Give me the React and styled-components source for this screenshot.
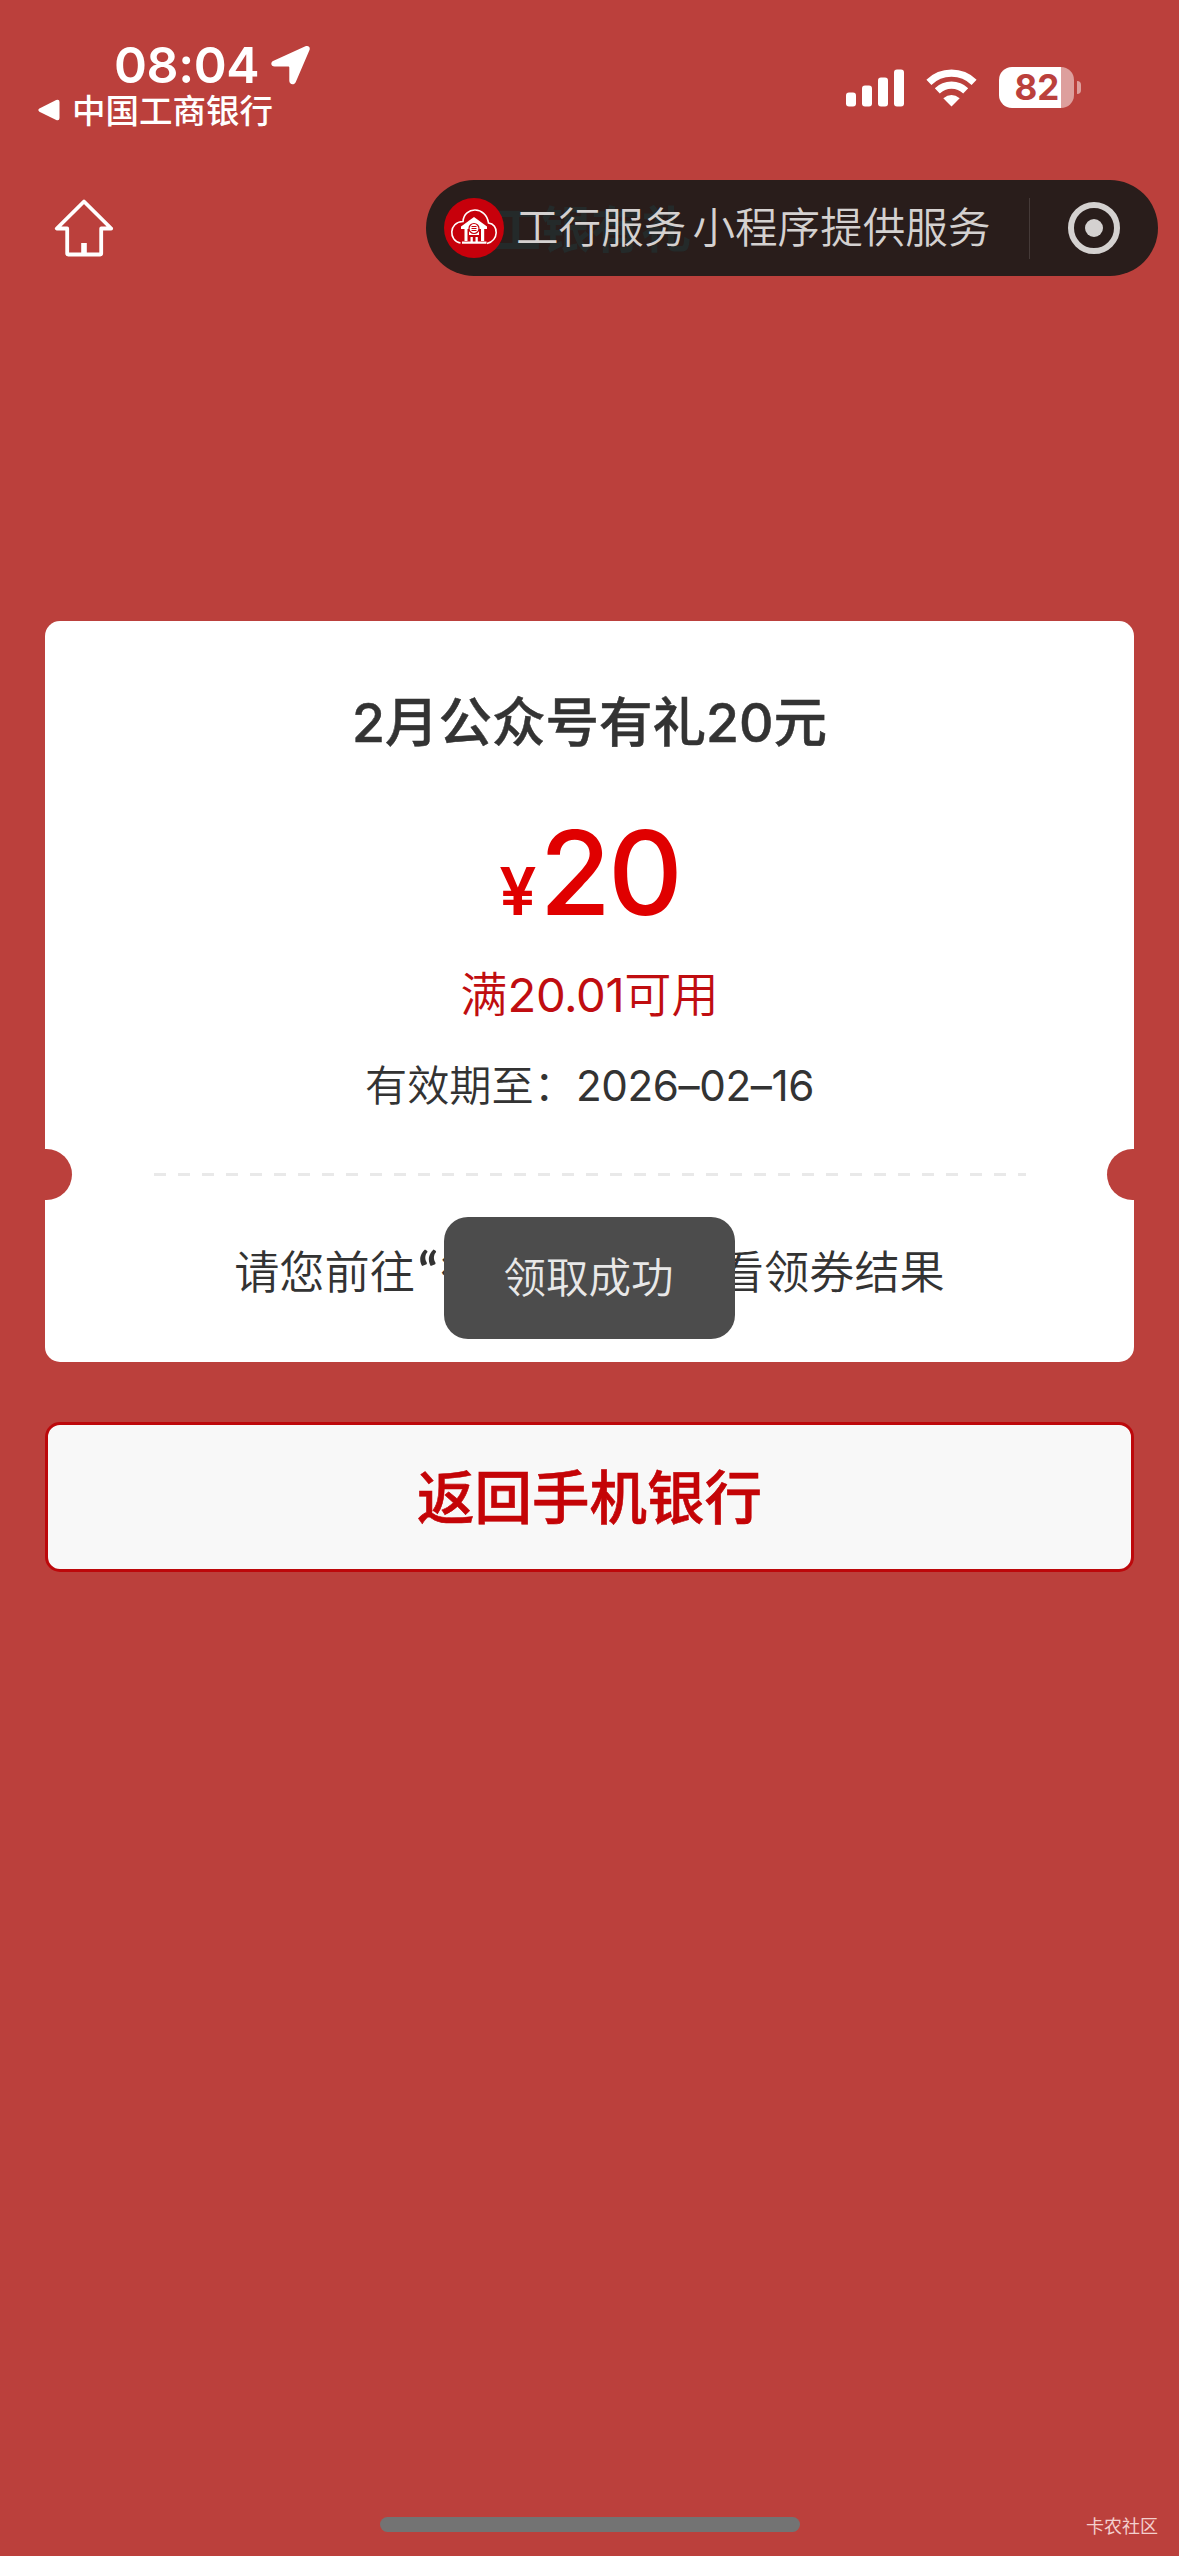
import React from 'react';
import styled, { createGlobalStyle } from 'styled-components';

const RED = '#bb403c';

const Global = createGlobalStyle`
  * { box-sizing: border-box; }
  html, body { margin: 0; background: ${RED}; }
  body { font-family: Inter, "Noto Sans CJK SC", sans-serif; color: #333; }
  svg { display: block; }
`;

const Screen = styled.main`
  position: relative;
  display: flex;
  flex-direction: column;
  width: 1179px;
  height: 2556px;
  overflow: hidden;
  background: ${RED};
`;

const StatusBar = styled.header`
  display: flex;
  justify-content: space-between;
  height: 140px;
  padding: 40px 98px 0 38px;
  color: #fff;
`;

const StatusLeft = styled.div`
  display: flex;
  flex-direction: column;
`;

const ClockRow = styled.div`
  display: flex;
  align-items: center;
  gap: 12px;
  height: 50px;
  padding-left: 76px;
`;

const Clock = styled.span`
  font-size: 50px;
  font-weight: 600;
  line-height: 50px;
  letter-spacing: -0.4px;
  white-space: nowrap;
`;

const BackRow = styled.div`
  display: flex;
  align-items: center;
  gap: 12px;
  height: 40px;
  font-family: "Noto Sans CJK SC", sans-serif;
  font-size: 33.5px;
  font-weight: 500;
  line-height: 38px;
  white-space: nowrap;
`;

const BackLabel = styled.span`
  padding-bottom: 3px;
`;

const StatusRight = styled.div`
  display: flex;
  align-items: center;
  gap: 22px;
  height: 95px;
`;

const BatteryWrap = styled.div`
  display: flex;
  align-items: center;
  gap: 3px;
`;

const Battery = styled.div`
  display: flex;
  align-items: center;
  justify-content: center;
  width: 75px;
  height: 41px;
  padding-left: 1px;
  border-radius: 13px;
  background: linear-gradient(90deg, #fff 62px, #dd9f9d 62px);
  color: ${RED};
  font-size: 35px;
  font-weight: 700;
  line-height: 41px;
`;

const BatteryTip = styled.div`
  width: 4px;
  height: 13px;
  border-radius: 0 4px 4px 0;
  background: #dd9f9d;
`;

const NavBar = styled.nav`
  display: flex;
  align-items: center;
  justify-content: space-between;
  height: 176px;
  padding: 0 21px 0 54px;
`;

const Capsule = styled.div`
  position: relative;
  display: flex;
  align-items: center;
  width: 732px;
  height: 96px;
  padding-left: 18px;
  border-radius: 48px;
  background: #291d1b;
  color: #d4d1d0;
`;

const GhostTitle = styled.span`
  position: absolute;
  left: 65px;
  top: 14px;
  font-family: "Noto Sans CJK SC", sans-serif;
  font-size: 50px;
  font-weight: 700;
  line-height: 64px;
  color: #242a2a;
  white-space: nowrap;
`;

const LogoSlot = styled.div`
  position: relative;
`;

const CapsuleText = styled.div`
  position: relative;
  display: flex;
  gap: 6px;
  margin-left: 12px;
  width: 509px;
  padding-bottom: 6px;
  font-family: "Noto Sans CJK SC", sans-serif;
  font-size: 42.6px;
  font-weight: 350;
  line-height: 60px;
  white-space: nowrap;
`;

const CapsuleDivider = styled.div`
  width: 1px;
  height: 61px;
  margin-left: 4px;
  background: #453a38;
`;

const CloseRing = styled.div`
  display: flex;
  align-items: center;
  justify-content: center;
  width: 52px;
  height: 52px;
  margin-left: 38px;
  border: 6px solid #d4d1d0;
  border-radius: 50%;

  &::after {
    content: '';
    width: 18px;
    height: 18px;
    border-radius: 50%;
    background: #d4d1d0;
  }
`;

const Content = styled.section`
  display: flex;
  flex-direction: column;
  gap: 60px;
  padding: 305px 45px 0;
`;

const Card = styled.article`
  position: relative;
  display: flex;
  flex-direction: column;
  align-items: center;
  height: 741px;
  border-radius: 15px;
  background: #fff;
  overflow: hidden;
`;

const CardTitle = styled.h1`
  margin: 65px 0 0;
  font-size: 53.5px;
  font-weight: 500;
  line-height: 74px;
  -webkit-text-stroke: 0.5px #333;
  white-space: nowrap;
`;

const Amount = styled.div`
  display: flex;
  align-items: baseline;
  gap: 3px;
  height: 120px;
  margin-top: 53px;
  color: #e00000;
  line-height: 120px;
`;

const Figure = styled.span`
  font-family: Inter, sans-serif;
  font-size: ${(p) => p.$size}px;
  font-weight: ${(p) => p.$weight};
  letter-spacing: ${(p) => p.$track || 0}px;
`;

const Digits = styled.span`
  font-weight: 400;
  letter-spacing: -0.4px;
`;

const Condition = styled.p`
  margin: 29px 0 0;
  font-size: 47.2px;
  font-weight: 350;
  line-height: 66px;
  color: #c00d10;
  white-space: nowrap;
`;

const Validity = styled.p`
  margin: 29px 0 0;
  font-size: 42.2px;
  font-weight: 350;
  line-height: 58px;
  white-space: nowrap;
`;

const TearLine = styled.div`
  display: flex;
  align-items: center;
  justify-content: space-between;
  width: 1089px;
  height: 51px;
  margin-top: 34px;
`;

const Notch = styled.div`
  width: 51px;
  height: 51px;
  margin: ${(p) => (p.$right ? '0 -24px 0 0' : '0 0 0 -24px')};
  border-radius: 50%;
  background: ${RED};
`;

const Dashes = styled.div`
  width: 872px;
  height: 3px;
  background: repeating-linear-gradient(90deg, #e9e9e9 0 12px, transparent 12px 24px);
`;

const Hint = styled.p`
  display: flex;
  margin: 38px 0 0;
  font-family: "Noto Sans CJK SC", sans-serif;
  font-size: 45.2px;
  font-weight: 350;
  line-height: 64px;
  white-space: nowrap;
`;

const Punct = styled.span`
  width: 26px;
  font-family: Lato, sans-serif;
  font-size: 52px;
  font-weight: 700;
  text-align: center;
`;

const BackButton = styled.button`
  height: 150px;
  padding: 0 0 6px;
  border: 3px solid #bd080b;
  border-radius: 15px;
  background: #f8f8f8;
  color: #c40407;
  font-family: "Noto Sans CJK SC", sans-serif;
  font-size: 57.5px;
  font-weight: 500;
  -webkit-text-stroke: 0.6px #c40407;
`;

const Toast = styled.div`
  position: absolute;
  left: 444px;
  top: 1217px;
  display: flex;
  align-items: center;
  justify-content: center;
  width: 291px;
  height: 122px;
  padding: 0 2px 7px 0;
  border-radius: 24px;
  background: #4c4c4c;
  color: #e8e8e8;
  font-family: "Noto Sans CJK SC", sans-serif;
  font-size: 42.5px;
  font-weight: 350;
`;

const HomeIndicator = styled.div`
  position: absolute;
  left: 380px;
  bottom: 24px;
  width: 420px;
  height: 15px;
  border-radius: 8px;
  background: #737373;
`;

const Watermark = styled.span`
  position: absolute;
  right: 21px;
  bottom: 18px;
  font-family: "Noto Sans CJK SC", sans-serif;
  font-size: 18px;
  line-height: 26px;
  color: #f3cfcd;
`;

const LocationArrow = () => (
  <svg width="40" height="40" viewBox="0 0 40 40" fill="#fff">
    <path d="M2.6 15.8 34.4 1.3c3-1.3 5.3 1 4 4L24.8 36.9c-1.5 3.6-6.5 2.7-6.5-1.1V22.400c0-.5-.3-.8-.8-.8H3.700c-3.900 0-4.700-4.300-1.100-5.800Z" />
  </svg>
);

const BackTriangle = () => (
  <svg width="22" height="22" viewBox="0 0 22 22" fill="#fff">
    <path d="M1.400 9.400 18.200 1Q21.500 0 21.500 3v16q0 3-3.300 2L1.400 12.800Q-.8 11 1.400 9.400Z" />
  </svg>
);

const Signal = () => (
  <svg width="58" height="38" viewBox="0 0 58 38" fill="#fff">
    <rect x="0" y="23.500" width="10" height="14" rx="3" />
    <rect x="16" y="16.500" width="10" height="21" rx="3" />
    <rect x="32" y="8.500" width="10" height="29" rx="3" />
    <rect x="48" y="0.500" width="10" height="37" rx="3" />
  </svg>
);

const Wifi = () => (
  <svg width="51" height="38" viewBox="0 0 51 38" fill="none" stroke="#fff">
    <path d="M2.900 13.300a32.500 32.500 0 0 1 45.200 0" strokeWidth="7.200" />
    <path d="M11.300 21.900a20.500 20.500 0 0 1 28.400 0" strokeWidth="7.200" />
    <path d="M25.500 37.500 17.300 29.300q8.200-6.600 16.400 0Z" fill="#fff" stroke="none" />
  </svg>
);

const House = () => (
  <svg width="60" height="58" viewBox="0 0 60 58" fill="none" stroke="#fff" strokeWidth="3.800" strokeLinejoin="round">
    <path d="M30 2.500 2.800 29.500h10.400V54.500q0 1 1 1h32q1 0 1-1V29.500H57.200Z" />
    <path d="M30 44v11" strokeWidth="5.600" />
  </svg>
);

const Logo = () => (
  <svg width="60" height="60" viewBox="0 0 60 60">
    <circle cx="30" cy="30" r="30" fill="#c7000b" />
    <path
      d="M16.500 45C4.500 43 4.500 24 19 23.500C20 8 42 8 44.500 25C55 26 55 43 43 45.500"
      fill="none"
      stroke="#fff"
      strokeWidth="1.600"
    />
    <path d="M30 19 43 28.500v2.500H17v-2.500Z" fill="#fff" />
    <path d="M20.500 31h3v12h-3ZM25 31h10v6h-10ZM26.500 39h2.300v5h-2.300ZM31.500 39h2.300v5h-2.300ZM37 31h3.200v12H37ZM18 43.500h24.500v2.300H18Z" fill="#fff" />
    <circle cx="30" cy="30.500" r="5" fill="#fff" stroke="#c7000b" strokeWidth="1.200" />
    <path d="M27.500 28.500h5M27.500 30.500h5M27.500 32.500h5" stroke="#c7000b" strokeWidth="1" />
  </svg>
);

export default function App() {
  return (
    <Screen>
      <Global />
      <StatusBar>
        <StatusLeft>
          <ClockRow>
            <Clock>08:04</Clock>
            <LocationArrow />
          </ClockRow>
          <BackRow>
            <BackTriangle />
            <BackLabel>中国工商银行</BackLabel>
          </BackRow>
        </StatusLeft>
        <StatusRight>
          <Signal />
          <Wifi />
          <BatteryWrap>
            <Battery>82</Battery>
            <BatteryTip />
          </BatteryWrap>
        </StatusRight>
      </StatusBar>
      <NavBar>
        <House />
        <Capsule>
          <GhostTitle>工银有礼</GhostTitle>
          <LogoSlot>
            <Logo />
          </LogoSlot>
          <CapsuleText>
            <span>工行服务</span>
            <span>小程序提供服务</span>
          </CapsuleText>
          <CapsuleDivider />
          <CloseRing />
        </Capsule>
      </NavBar>
      <Content>
        <Card>
          <CardTitle>2月公众号有礼20元</CardTitle>
          <Amount>
            <Figure $size={66} $weight={600}>¥</Figure>
            <Figure $size={116} $weight={500} $track={-3}>20</Figure>
          </Amount>
          <Condition>
            满<Digits>20.01</Digits>可用
          </Condition>
          <Validity>
            有效期至：<Digits>2026–02–16</Digits>
          </Validity>
          <TearLine>
            <Notch />
            <Dashes />
            <Notch $right />
          </TearLine>
          <Hint>
            请您前往<Punct>“</Punct>微信<Punct>-</Punct>卡包<Punct>”</Punct>查看领券结果
          </Hint>
        </Card>
        <BackButton>返回手机银行</BackButton>
      </Content>
      <Toast>领取成功</Toast>
      <HomeIndicator />
      <Watermark>卡农社区</Watermark>
    </Screen>
  );
}
